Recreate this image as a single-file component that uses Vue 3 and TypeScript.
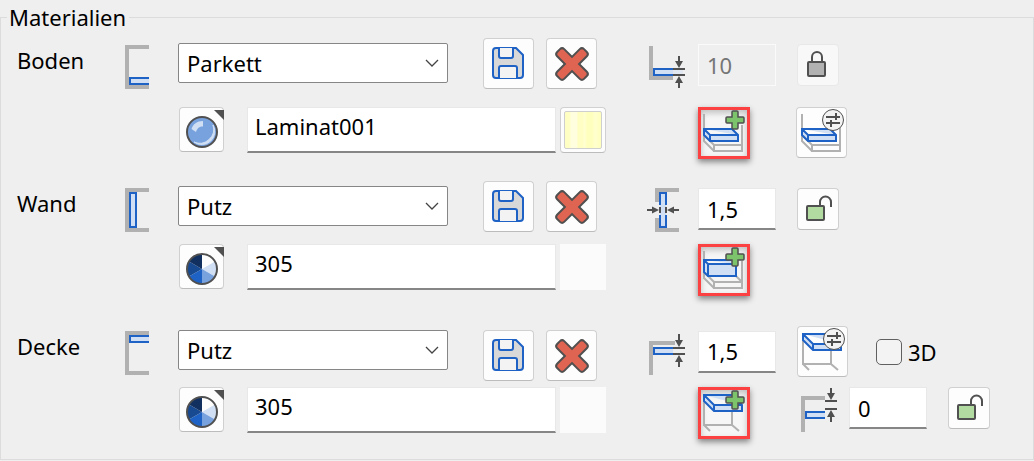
<script setup lang="ts">
import { reactive } from 'vue'

type Part = 'floor' | 'wall' | 'ceiling'

interface Surface {
  id: Part
  label: string
  covering: string
  options: string[]
  material: string
  textured: boolean
  thickness: string
  locked: boolean
}

const surfaces = reactive<Surface[]>([
  { id: 'floor', label: 'Boden', covering: 'Parkett', options: ['Parkett'], material: 'Laminat001', textured: true, thickness: '10', locked: true },
  { id: 'wall', label: 'Wand', covering: 'Putz', options: ['Putz'], material: '305', textured: false, thickness: '1,5', locked: false },
  { id: 'ceiling', label: 'Decke', covering: 'Putz', options: ['Putz'], material: '305', textured: false, thickness: '1,5', locked: false },
])

const ceiling = reactive({ threeD: false, offset: '0' })

const slices = ['#fdfdfd', '#d0dff3', '#78a2de', '#1f62c5', '#184a91', '#12305f']

const sketchPaths: Record<Part, string> = {
  floor: 'M24 33H5V39H24',
  wall: 'M5 5H11V39H5Z',
  ceiling: 'M24 5H5V11H24',
}
</script>

<template>
  <fieldset class="materials">
    <legend>Materialien</legend>

    <section v-for="s in surfaces" :key="s.id" class="surface" :class="s.id">
      <label class="name" :for="s.id + '-covering'">{{ s.label }}</label>

      <svg class="sketch" width="24" height="44" viewBox="0 0 24 44" aria-hidden="true">
        <path class="gray4" d="M24 2H2V42H24" />
        <path class="blue pale" :d="sketchPaths[s.id]" />
      </svg>

      <div class="main">
        <div class="row covering">
          <div class="select">
            <select :id="s.id + '-covering'" v-model="s.covering">
              <option v-for="o in s.options" :key="o">{{ o }}</option>
            </select>
            <svg width="14" height="8" viewBox="0 0 14 8" aria-hidden="true">
              <path d="M1 1L7 7L13 1" fill="none" stroke="#444" stroke-width="1.3" />
            </svg>
          </div>
          <button type="button" class="btn large" aria-label="Speichern">
            <svg width="33" height="33" viewBox="0 0 33 33">
              <g stroke="#1f62c5" stroke-width="2">
                <path fill="#d8d8d8" d="M4 1H24L31 8V28A3 3 0 0 1 28 31H4A3 3 0 0 1 1 28V4A3 3 0 0 1 4 1Z" />
                <path fill="#f3f3f3" d="M7 1V9A2 2 0 0 0 9 11H19A2 2 0 0 0 21 9V1" />
                <path fill="#f3f3f3" d="M7 31V21A2 2 0 0 1 9 19H23A2 2 0 0 1 25 21V31" />
              </g>
            </svg>
          </button>
          <button type="button" class="btn large" aria-label="Löschen">
            <svg width="36" height="36" viewBox="-18 -18 36 36">
              <g transform="rotate(45)">
                <g fill="#505050">
                  <rect x="-20" y="-6" width="40" height="12" rx="4" />
                  <rect x="-6" y="-20" width="12" height="40" rx="4" />
                </g>
                <g fill="#df6452">
                  <rect x="-18" y="-4" width="36" height="8" rx="2" />
                  <rect x="-4" y="-18" width="8" height="36" rx="2" />
                </g>
              </g>
            </svg>
          </button>
        </div>

        <div class="row material">
          <button type="button" class="btn kind" aria-label="Materialart">
            <svg width="45" height="45" viewBox="0 0 45 45">
              <path d="M35 3H45V13Z" fill="#505050" />
              <template v-if="s.textured">
                <circle cx="23" cy="25" r="15" fill="#78a2de" stroke="#505050" stroke-width="2" />
                <path d="M34 18A13 13 0 0 1 15 35A14 14 0 0 0 34 18Z" fill="#d0dff3" stroke="#d0dff3" />
                <path d="M12.500 22C14 17 18 14 24 14V19.500C20 19.500 18.500 21 17 25Z" fill="#d0dff3" />
              </template>
              <template v-else>
                <g transform="translate(23 25)">
                  <path
                    v-for="(color, i) in slices"
                    :key="color"
                    d="M0 0V-15A15 15 0 0 1 13 -7.500Z"
                    :fill="color"
                    :transform="`rotate(${i * 60})`"
                  />
                  <circle r="15" fill="none" stroke="#505050" stroke-width="2" />
                </g>
              </template>
            </svg>
          </button>
          <input v-model="s.material" class="field wide" type="text" :aria-label="s.label + ' Material'" />
          <button v-if="s.textured" type="button" class="btn swatch" aria-label="Textur"><span class="texture"></span></button>
          <span v-else class="swatch blank"></span>
        </div>
      </div>

      <div class="side">
        <div class="row thickness">
          <svg v-if="s.id === 'floor'" class="gauge" width="38" height="44" viewBox="0 0 38 44" aria-hidden="true">
            <path class="gray4" d="M4 0V32H26" />
            <path class="pale" d="M7 23H36V29H7Z" opacity=".45" />
            <path class="blue pale" d="M26 23H7V29H26" />
            <path class="dark" d="M26 23H38M26 29H38M32 10V17M32 35V42" />
            <path class="tip" d="M28 15H36L32 22ZM28 37H36L32 30Z" />
          </svg>
          <svg v-else-if="s.id === 'wall'" class="gauge" width="38" height="44" viewBox="0 0 38 44" aria-hidden="true">
            <path class="gray4" d="M32 2H10V14M10 30V42H32" />
            <path class="pale" d="M13 5H19V39H13Z" />
            <path class="blue" d="M13 17V5H19V17M13 27V39H19V27" />
            <path class="dark" d="M13 19V25M19 19V25M0 22H6M26 22H32" />
            <path class="tip" d="M5 18.500V25.500L12 22ZM27 18.500V25.500L20 22Z" />
          </svg>
          <svg v-else class="gauge" width="38" height="44" viewBox="0 0 38 44" aria-hidden="true">
            <path class="gray4" d="M28 10H4V42" />
            <path class="blue pale" d="M26 15H7V21H26" />
            <path class="dark" d="M26 15H38M26 21H38M32 1V8M32 27V34" />
            <path class="tip" d="M28 7H36L32 14ZM28 29H36L32 22Z" />
          </svg>

          <input v-model="s.thickness" class="field small" type="text" :disabled="s.locked" :aria-label="s.label + ' Dicke'" />

          <button v-if="s.id !== 'ceiling'" type="button" class="btn lock" :class="{ closed: s.locked }" aria-label="Sperre">
            <svg width="42" height="42" viewBox="0 0 42 42">
              <template v-if="s.locked">
                <path class="shackle" d="M15 18V13A5 5 0 0 1 25 13V18" />
                <rect class="body" x="11" y="18" width="17" height="14" rx="1" fill="#b1b1b1" />
              </template>
              <template v-else>
                <path class="shackle" d="M23 18V14A5.500 5.500 0 0 1 34 14V19" />
                <rect class="body" x="10" y="18" width="17" height="14" rx="1" fill="#b2dba1" />
              </template>
            </svg>
          </button>
          <template v-else>
            <button type="button" class="btn large" aria-label="Decke einstellen">
              <svg width="51" height="51" viewBox="0 0 51 51">
                <path class="gray2" d="M6 14V38H34V25M6 38L12 44M34 38L41 44" />
                <path class="blue pale" d="M6 8H34L44 18V24H16L6 14ZM6 8L16 18H44M16 18V24" />
                <circle class="knob" cx="37" cy="13" r="10.500" />
                <path class="sliders" d="M30 10H44M40 6V13M30 16H44M35 13V20" />
              </svg>
            </button>
            <label class="check"><input v-model="ceiling.threeD" type="checkbox" />3D</label>
          </template>
        </div>

        <div class="row extras">
          <button type="button" class="btn add" :aria-label="s.label + ' hinzufügen'">
            <svg width="52" height="52" viewBox="0 0 52 52">
              <template v-if="s.id === 'floor'">
                <path class="gray2" d="M6 7V34L16 44M6 28L16 38H44M44 18V44H16V38" />
                <path class="blue pale" d="M6 22H34L40 28V34H12L6 28ZM6 22L12 28H40M12 28V34" />
              </template>
              <template v-else-if="s.id === 'wall'">
                <path class="gray2" d="M6 7V34L16 44M6 28L16 38H44M38 32L44 38M44 17V44H16V38" />
                <path class="blue pale" d="M6 16H34L38 20V32H10L6 28ZM6 16L10 20H38M10 20V32" />
              </template>
              <template v-else>
                <path class="gray2" d="M6 14V38H34V25M6 38L12 44M34 38L41 44" />
                <path class="blue pale" d="M6 8H34L44 18V24H16L6 14ZM6 8L16 18H44M16 18V24" />
              </template>
              <path
                d="M35 4H39Q40 4 40 5V10H45Q46 10 46 11V15Q46 16 45 16H40V21Q40 22 39 22H35Q34 22 34 21V16H29Q28 16 28 15V11Q28 10 29 10H34V5Q34 4 35 4Z"
                fill="#7dc36b"
                stroke="#505050"
                stroke-width="1.5"
              />
            </svg>
          </button>

          <button v-if="s.id === 'floor'" type="button" class="btn large" aria-label="Boden einstellen">
            <svg width="51" height="51" viewBox="0 0 51 51">
              <path class="gray2" d="M6 7V34L16 44M6 28L16 38H44M44 18V44H16V38" />
              <path class="blue pale" d="M6 22H34L40 28V34H12L6 28ZM6 22L12 28H40M12 28V34" />
              <circle class="knob" cx="37" cy="13" r="10.500" />
              <path class="sliders" d="M30 10H44M40 6V13M30 16H44M35 13V20" />
            </svg>
          </button>

          <div v-if="s.id === 'ceiling'" class="offset">
            <svg class="gauge" width="36" height="46" viewBox="0 0 36 46" aria-hidden="true">
              <path class="gray4" d="M24 11H2V45" />
              <path class="blue pale" d="M24 25H5V31H24" />
              <path class="dark" d="M24 14H36M24 22H36M30 1V8M30 28V35" />
              <path class="tip" d="M26 6H34L30 13ZM26 30H34L30 23Z" />
            </svg>
            <input v-model="ceiling.offset" class="field small" type="text" aria-label="Abstand" />
            <button type="button" class="btn lock" aria-label="Abstand sperren">
              <svg width="42" height="42" viewBox="0 0 42 42">
                <path class="shackle" d="M23 18V14A5.500 5.500 0 0 1 34 14V19" />
                <rect class="body" x="10" y="18" width="17" height="14" rx="1" fill="#b2dba1" />
              </svg>
            </button>
          </div>
        </div>
      </div>
    </section>
  </fieldset>
</template>

<style>
body {
  background: #efefef;
}
</style>

<style scoped>
.materials,
.materials input,
.materials select {
  font-family: "Noto Sans", "Open Sans", sans-serif;
  font-size: 22px;
  line-height: 32px;
  color: #000;
}
.materials {
  margin: 0;
  padding: 4px 0 0 16px;
  border: 1px solid #dcdcdc;
  min-width: 0;
}
legend {
  margin-left: -10px;
  padding: 0 3px 0 2px;
  line-height: 34px;
}
.surface {
  display: grid;
  grid-template-columns: 108px 53px minmax(0, 1fr) 386px;
  height: 143px;
}
.ceiling {
  height: 135px;
}
.name {
  padding-top: 6px;
}
.sketch {
  margin-top: 7px;
}
.gauge {
  flex: none;
}
.row {
  display: flex;
  align-items: flex-start;
}
.covering,
.thickness {
  height: 63px;
}
.floor .covering,
.floor .thickness {
  height: 69px;
}
.covering {
  padding-right: 50px;
}
.covering .btn + .btn {
  margin-left: 12px;
}
.select {
  position: relative;
  flex: 1;
  margin-right: 35px;
  padding-top: 5px;
  min-width: 0;
}
.select select {
  display: block;
  box-sizing: border-box;
  width: 100%;
  height: 40px;
  padding: 0 40px 0 4px;
  border: 1px solid #868686;
  border-radius: 2px;
  background: #fff;
  appearance: none;
  padding-left: 8px;
}
.select svg {
  position: absolute;
  right: 9px;
  top: 21px;
  pointer-events: none;
}
.ceiling .covering {
  padding-top: 6px;
  height: 57px;
}
.ceiling .select {
  padding-top: 0;
}
.ceiling .select svg {
  top: 16px;
}
.material {
  padding: 0 41px 0 1px;
}
.btn {
  flex: none;
  display: flex;
  align-items: center;
  justify-content: center;
  box-sizing: border-box;
  padding: 0;
  border: 1px solid #d0d0d0;
  border-bottom-color: #bcbcbc;
  border-radius: 4px;
  background: #fdfdfd;
}
.btn svg {
  flex: none;
}
.large {
  width: 51px;
  height: 51px;
}
.kind {
  width: 45px;
  height: 45px;
  margin-right: 23px;
}
.swatch {
  flex: none;
  width: 46px;
  height: 46px;
  margin-left: 4px;
}
.blank {
  background: #fbfbfb;
}
.texture {
  box-sizing: border-box;
  width: 38px;
  height: 38px;
  border: 1px solid #cfcfcf;
  border-radius: 2px;
  background: linear-gradient(90deg, #ffffc4 0 12%, #ffffe0 18% 32%, #ffffc4 36% 48%, #ffffd2 54%, #ffffbd 62% 75%, #ffffcf 84%, #ffffbc);
}
.field {
  box-sizing: border-box;
  min-width: 0;
  border: 1px solid #e8e8e8;
  border-bottom: 2px solid #868686;
  border-radius: 0;
  background: #fff;
  outline: none;
}
.wide {
  flex: 1;
  height: 46px;
  padding: 0 7px 8px;
}
.small {
  flex: none;
  width: 78px;
  height: 42px;
  padding: 0 8px;
}
.materials .field:disabled {
  border: 1px solid #fafafa;
  background: #efefef;
  color: #757575;
}
.side {
  min-width: 0;
}
.thickness {
  box-sizing: border-box;
  padding-top: 7px;
}
.floor .thickness {
  padding-top: 6px;
}
.floor .gauge {
  margin-top: 2px;
}
.thickness .small {
  margin: 0 21px 0 13px;
}
.ceiling .thickness {
  align-items: center;
  padding: 2px 0 10px;
}
.ceiling .thickness .gauge {
  align-self: flex-end;
}
.lock {
  width: 42px;
  height: 42px;
}
.closed {
  border-color: #e8e8e8;
  background: #f8f8f8;
}
.check {
  display: flex;
  align-items: center;
  gap: 6px;
  margin-left: 28px;
}
.check input {
  appearance: none;
  box-sizing: border-box;
  width: 26px;
  height: 26px;
  margin: 0;
  border: 1px solid #606060;
  border-radius: 5px;
  background: #f3f3f3;
}
.check input:checked {
  background: #1f62c5;
}
.extras {
  padding-left: 51px;
}
.add {
  width: 52px;
  height: 52px;
  margin-right: 46px;
  border: 0;
  border-radius: 0;
  outline: 3px solid #fb4141;
  outline-offset: -3px;
  background: #f6f6f6;
  box-shadow: 0 3px 6px rgba(0, 0, 0, 0.45), inset 0 3px 6px 3px rgba(0, 0, 0, 0.22);
}
.offset {
  display: flex;
  margin-left: 5px;
}
.offset .small {
  margin: 0 21px 0 12px;
}
.gray4 {
  fill: none;
  stroke: #b1b1b1;
  stroke-width: 4;
}
.gray2 {
  fill: none;
  stroke: #b1b1b1;
  stroke-width: 2;
}
.blue {
  fill: none;
  stroke: #1f62c5;
  stroke-width: 2;
}
.pale {
  fill: #d0dff3;
}
.dark {
  fill: none;
  stroke: #505050;
  stroke-width: 2;
}
.tip {
  fill: #505050;
}
.shackle {
  fill: none;
  stroke: #505050;
  stroke-width: 2;
}
.body {
  stroke: #505050;
  stroke-width: 2;
}
.knob {
  fill: #f3f3f3;
  stroke: #505050;
}
.sliders {
  fill: none;
  stroke: #505050;
  stroke-width: 2;
}
</style>
